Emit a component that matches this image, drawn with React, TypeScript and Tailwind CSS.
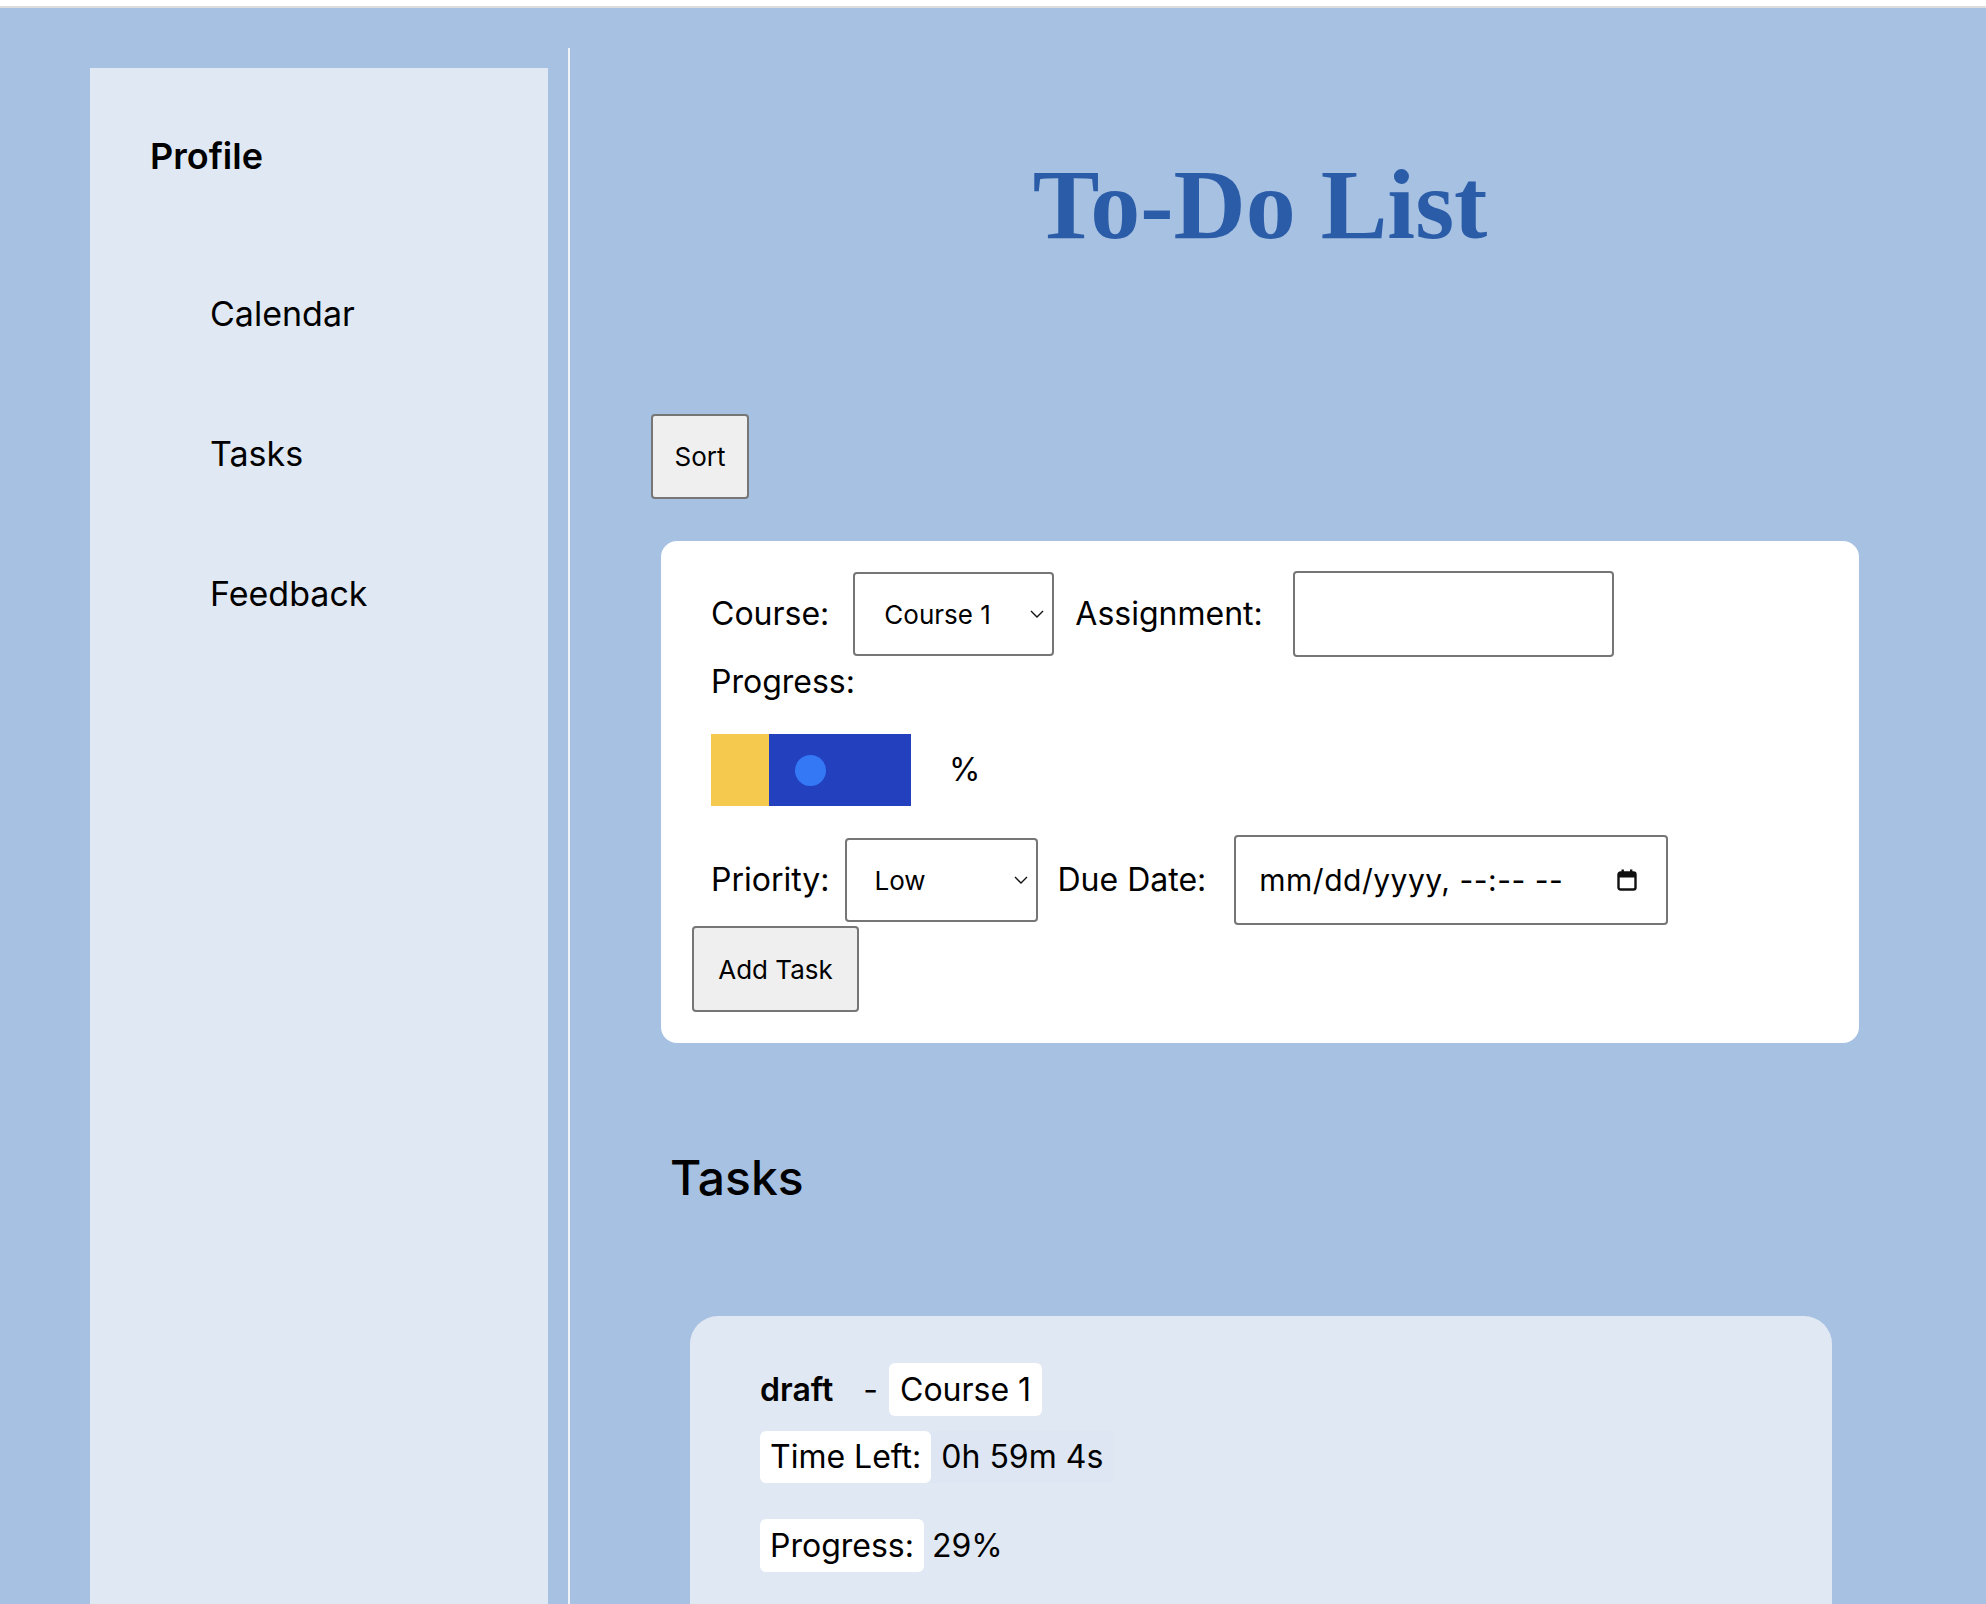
import React from "react";

const sans = "font-['Inter','Noto_Sans',sans-serif]";

function Chevron() {
  return (
    <svg width="14" height="9" viewBox="0 0 14 9" className="absolute right-[10px] top-1/2 -translate-y-1/2">
      <polyline points="1,1.5 7,7.5 13,1.5" fill="none" stroke="#111" strokeWidth="1.4" />
    </svg>
  );
}

function CalendarIcon() {
  return (
    <svg width="20" height="22" viewBox="0 0 20 22">
      <rect x="1.5" y="3.5" width="17" height="17" rx="2" fill="none" stroke="#111" strokeWidth="2.4" />
      <rect x="1.5" y="3.5" width="17" height="5" fill="#111" />
      <rect x="4.5" y="0.5" width="2.4" height="4" fill="#111" />
      <rect x="13" y="0.5" width="2.4" height="4" fill="#111" />
    </svg>
  );
}

export default function App() {
  return (
    <div className={`h-[1604px] overflow-hidden flex flex-col bg-[#a7c1e2] text-black ${sans}`}>
      <div className="h-[8px] shrink-0 bg-white border-b-2 border-[#dddddd]" />
      <div className="flex flex-1 pl-[90px]">
        {/* sidebar */}
        <aside className="w-[458px] mt-[60px] bg-[#e0e8f3] pl-[60px] pt-[66px]">
          <p className="text-[36px] leading-[44px] font-semibold">Profile</p>
          <nav className="pl-[60px] mt-[114px] flex flex-col gap-[96px] text-[34px] leading-[44px]">
            <a>Calendar</a>
            <a>Tasks</a>
            <a>Feedback</a>
          </nav>
        </aside>
        <div className="w-[2px] ml-[20px] mt-[40px] bg-[#eef3f9]" />

        {/* main column */}
        <main className="pl-[81px] flex flex-col items-start">
          <h1 className="w-[1218px] mt-[147px] text-center font-['Liberation_Serif','Times_New_Roman',serif] font-bold text-[100px] leading-none text-[#2a5ca8]">
            To-Do List
          </h1>

          <button className="mt-[159px] w-[98px] h-[85px] bg-[#efefef] border-2 border-[#767676] rounded-[4px] text-[26px]">
            Sort
          </button>

          <section className="mt-[42px] ml-[10px] w-[1198px] bg-white rounded-[16px] px-[31px] pt-[30px] pb-[31px]">
            <div className="flex items-center h-[86px]">
              <label className="ml-[19px] text-[32px]">Course:</label>
              <div className="relative ml-[24px]">
                <select className="appearance-none w-[201px] h-[84px] border-2 border-[#767676] rounded-[4px] bg-white pl-[29px] text-[26px]">
                  <option>Course 1</option>
                </select>
                <Chevron />
              </div>
              <label className="ml-[21px] text-[32px]">Assignment:</label>
              <input className="ml-[30px] w-[321px] h-[86px] border-2 border-[#767676] rounded-[4px] bg-white" />
            </div>

            <p className="ml-[19px] text-[32px] leading-[50px]">Progress:</p>

            <div className="flex items-center mt-[27px] ml-[19px]">
              <div className="flex w-[200px] h-[72px]">
                <div className="w-[58px] bg-[#f5c94e]" />
                <div className="flex-1 bg-[#2340bf] flex items-center pl-[26px]">
                  <div className="w-[31px] h-[31px] rounded-full bg-[#3478f6]" />
                </div>
              </div>
              <span className="ml-[38px] text-[32px]">%</span>
            </div>

            <div className="flex items-center h-[90px] mt-[29px]">
              <label className="ml-[19px] text-[32px]">Priority:</label>
              <div className="relative ml-[15px]">
                <select className="appearance-none w-[193px] h-[84px] border-2 border-[#767676] rounded-[4px] bg-white pl-[28px] text-[26px]">
                  <option>Low</option>
                </select>
                <Chevron />
              </div>
              <label className="ml-[20px] text-[32px]">Due Date:</label>
              <div className="ml-[28px] w-[434px] h-[90px] border-2 border-[#767676] rounded-[4px] bg-white flex items-center pl-[23px] pr-[29px]">
                <span className="text-[30px] tracking-[0.5px] flex-1">mm/dd/yyyy, --:-- --</span>
                <CalendarIcon />
              </div>
            </div>

            <button className="mt-[1px] w-[167px] h-[86px] bg-[#efefef] border-2 border-[#767676] rounded-[4px] text-[26px]">
              Add Task
            </button>
          </section>

          <h2 className="mt-[99px] ml-[19px] text-[48px] leading-[72px] font-medium">Tasks</h2>

          <article className="mt-[102px] ml-[39px] w-[1142px] h-[500px] bg-[#e0e8f3] rounded-[28px] pt-[47px] pl-[70px] text-[32px]">
            <div className="flex items-center h-[53px]">
              <span className="font-semibold">draft</span>
              <span className="ml-[30px]">-</span>
              <span className="ml-[11px] h-[53px] px-[11px] flex items-center bg-white rounded-[6px]">Course 1</span>
            </div>
            <div className="flex items-center h-[52px] mt-[15px]">
              <span className="h-full px-[10px] flex items-center bg-white rounded-[6px]">Time Left:</span>
              <span className="h-full px-[10px] flex items-center bg-[#dde6f2]">0h 59m 4s</span>
            </div>
            <div className="flex items-center h-[53px] mt-[36px]">
              <span className="h-full px-[10px] flex items-center bg-white rounded-[6px]">Progress:</span>
              <span className="ml-[8px]">29%</span>
            </div>
          </article>
        </main>
      </div>
    </div>
  );
}
